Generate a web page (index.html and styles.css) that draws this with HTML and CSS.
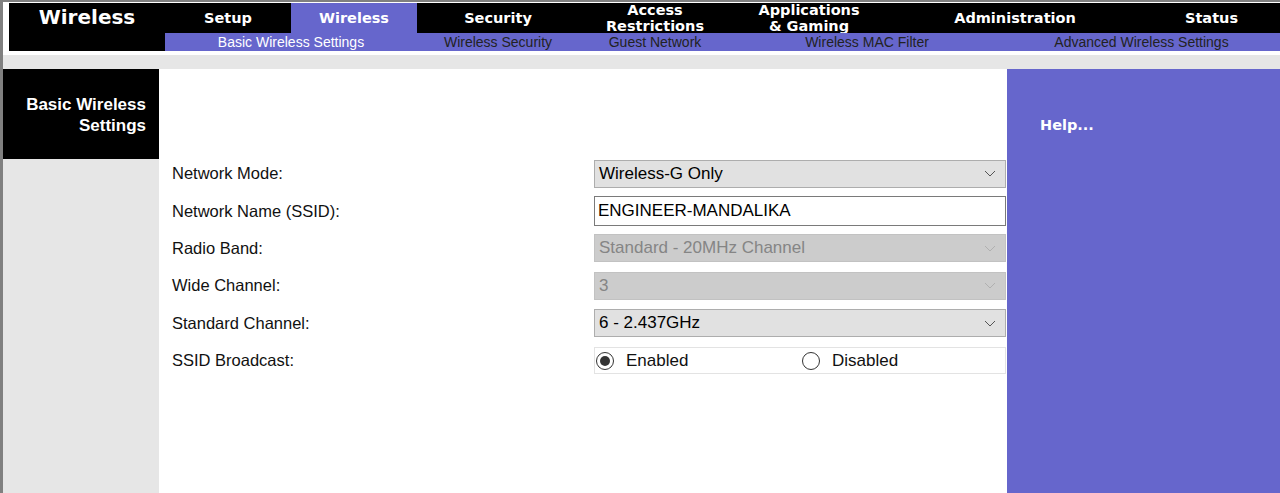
FILE: index.html
```html
<!DOCTYPE html>
<html>
<head>
<meta charset="utf-8">
<link rel="stylesheet" href="styles.css">
</head>
<body>
<div class="page">
  <header class="top">
    <div class="logo">Wireless</div>
    <div class="navwrap">
      <nav class="tabs">
        <div class="tab w126">Setup</div>
        <div class="tab w126 active">Wireless</div>
        <div class="tab w162">Security</div>
        <div class="tab w152 two">Access<br>Restrictions</div>
        <div class="tab w156 two">Applications<br>&amp; Gaming</div>
        <div class="tab w256">Administration</div>
        <div class="tab w137">Status</div>
      </nav>
      <nav class="subnav">
        <div class="sub s252 current">Basic Wireless Settings</div>
        <div class="sub s162">Wireless Security</div>
        <div class="sub s152">Guest Network</div>
        <div class="sub s272">Wireless MAC Filter</div>
        <div class="sub s277">Advanced Wireless Settings</div>
      </nav>
    </div>
  </header>
  <div class="gap"></div>
  <div class="band"></div>
  <main class="main">
    <aside class="side">
      <div class="side-title">Basic Wireless<br>Settings</div>
    </aside>
    <section class="content">
      <div class="form">
        <div class="label">Network Mode:</div>
        <div class="ctl select"><span>Wireless-G Only</span><svg class="chev" width="12" height="7" viewBox="0 0 12 7"><path d="M1 1 L6 6 L11 1" fill="none" stroke="currentColor" stroke-width="1"/></svg></div>

        <div class="label">Network Name (SSID):</div>
        <div class="ctl input">ENGINEER-MANDALIKA</div>

        <div class="label">Radio Band:</div>
        <div class="ctl select disabled"><span>Standard - 20MHz Channel</span><svg class="chev" width="12" height="7" viewBox="0 0 12 7"><path d="M1 1 L6 6 L11 1" fill="none" stroke="currentColor" stroke-width="1"/></svg></div>

        <div class="label">Wide Channel:</div>
        <div class="ctl select disabled"><span>3</span><svg class="chev" width="12" height="7" viewBox="0 0 12 7"><path d="M1 1 L6 6 L11 1" fill="none" stroke="currentColor" stroke-width="1"/></svg></div>

        <div class="label">Standard Channel:</div>
        <div class="ctl select"><span>6 - 2.437GHz</span><svg class="chev" width="12" height="7" viewBox="0 0 12 7"><path d="M1 1 L6 6 L11 1" fill="none" stroke="currentColor" stroke-width="1"/></svg></div>

        <div class="label">SSID Broadcast:</div>
        <div class="ctl radios">
          <div class="opt opt-en"><span class="radio on"></span>Enabled</div>
          <div class="opt"><span class="radio"></span>Disabled</div>
        </div>
      </div>
    </section>
    <aside class="help">Help...</aside>
  </main>
</div>
</body>
</html>
```
FILE: styles.css
```css
html, body {
  margin: 0;
  padding: 0;
  background: #fff;
}
.page {
  height: 493px;
  box-sizing: border-box;
  border-top: 2px solid #808080;
  border-left: 3px solid #808080;
  overflow: hidden;
  display: flex;
  flex-direction: column;
  font-family: "Liberation Sans", Arial, sans-serif;
}
.top {
  display: flex;
  padding: 1px 0 0 6px;
  height: 48px;
  flex: none;
}
.logo {
  width: 156px;
  background: #000;
  color: #fff;
  font-family: "DejaVu Sans", Verdana, sans-serif;
  font-weight: bold;
  font-size: 20px;
  text-align: center;
  line-height: 28px;
}
.navwrap {
  flex: 1;
  display: flex;
  flex-direction: column;
}
.tabs {
  display: flex;
  height: 30px;
  background: #000;
}
.tab {
  display: flex;
  align-items: center;
  justify-content: center;
  text-align: center;
  color: #fff;
  font-family: "DejaVu Sans", Verdana, sans-serif;
  font-weight: bold;
  font-size: 14.5px;
  line-height: 17px;
  height: 30px;
}
.tab.two { line-height: 16px; }
.tab.active { background: #6666cc; }
.w126 { width: 126px; }
.w162 { width: 162px; }
.w152 { width: 152px; }
.w156 { width: 156px; }
.w256 { width: 256px; }
.w137 { width: 137px; }
.subnav {
  display: flex;
  height: 18px;
  background: #6666cc;
}
.sub {
  text-align: center;
  font-size: 14px;
  line-height: 18px;
  color: #222;
}
.sub.current { color: #fff; }
.s252 { width: 252px; }
.s162 { width: 162px; }
.s152 { width: 152px; }
.s272 { width: 272px; }
.s277 { width: 277px; }
.gap { height: 4px; flex: none; }
.band { height: 14px; background: #e6e6e6; flex: none; }
.main {
  flex: 1;
  display: flex;
}
.side {
  width: 156px;
  background: #e6e6e6;
}
.side-title {
  height: 90px;
  box-sizing: border-box;
  background: #000;
  color: #fff;
  font-weight: bold;
  font-size: 17px;
  line-height: 21px;
  text-align: right;
  padding: 25px 13px 0 0;
}
.content {
  flex: 1;
  background: #fff;
  padding: 90px 0 0 13px;
}
.form {
  display: grid;
  grid-template-columns: 422px 412px;
  grid-auto-rows: 37.4px;
  align-items: center;
  margin-top: -4px;
}
.label {
  font-size: 16.5px;
  color: #111;
}
.ctl {
  box-sizing: border-box;
  height: 28px;
  display: flex;
  align-items: center;
  font-size: 17px;
}
.select {
  background: #e1e1e1;
  border: 1px solid #adadad;
  padding: 0 9px 0 4px;
  justify-content: space-between;
  color: #000;
}
.select .chev { color: #555; }
.select.disabled {
  background: #cccccc;
  border-color: #c2c2c2;
  color: #858585;
}
.select.disabled .chev { color: #b0b0b0; }
.input {
  background: #fff;
  border: 1px solid #7a7a7a;
  padding: 0 3px;
  height: 30px;
  color: #000;
}
.radios {
  border: 1px solid #e3e3e3;
  height: 27px;
  padding-left: 1px;
}
.opt {
  display: flex;
  align-items: center;
  color: #111;
}
.opt-en { width: 206px; }
.radio {
  width: 18px;
  height: 18px;
  box-sizing: border-box;
  border: 1px solid #333;
  border-radius: 50%;
  margin-right: 12px;
  display: flex;
  align-items: center;
  justify-content: center;
}
.radio.on::after {
  content: "";
  width: 10px;
  height: 10px;
  border-radius: 50%;
  background: #333;
}
.help {
  width: 273px;
  background: #6666cc;
  color: #fff;
  font-family: "DejaVu Sans", Verdana, sans-serif;
  font-weight: bold;
  font-size: 14.5px;
  padding: 48px 0 0 33px;
  box-sizing: border-box;
}
```
